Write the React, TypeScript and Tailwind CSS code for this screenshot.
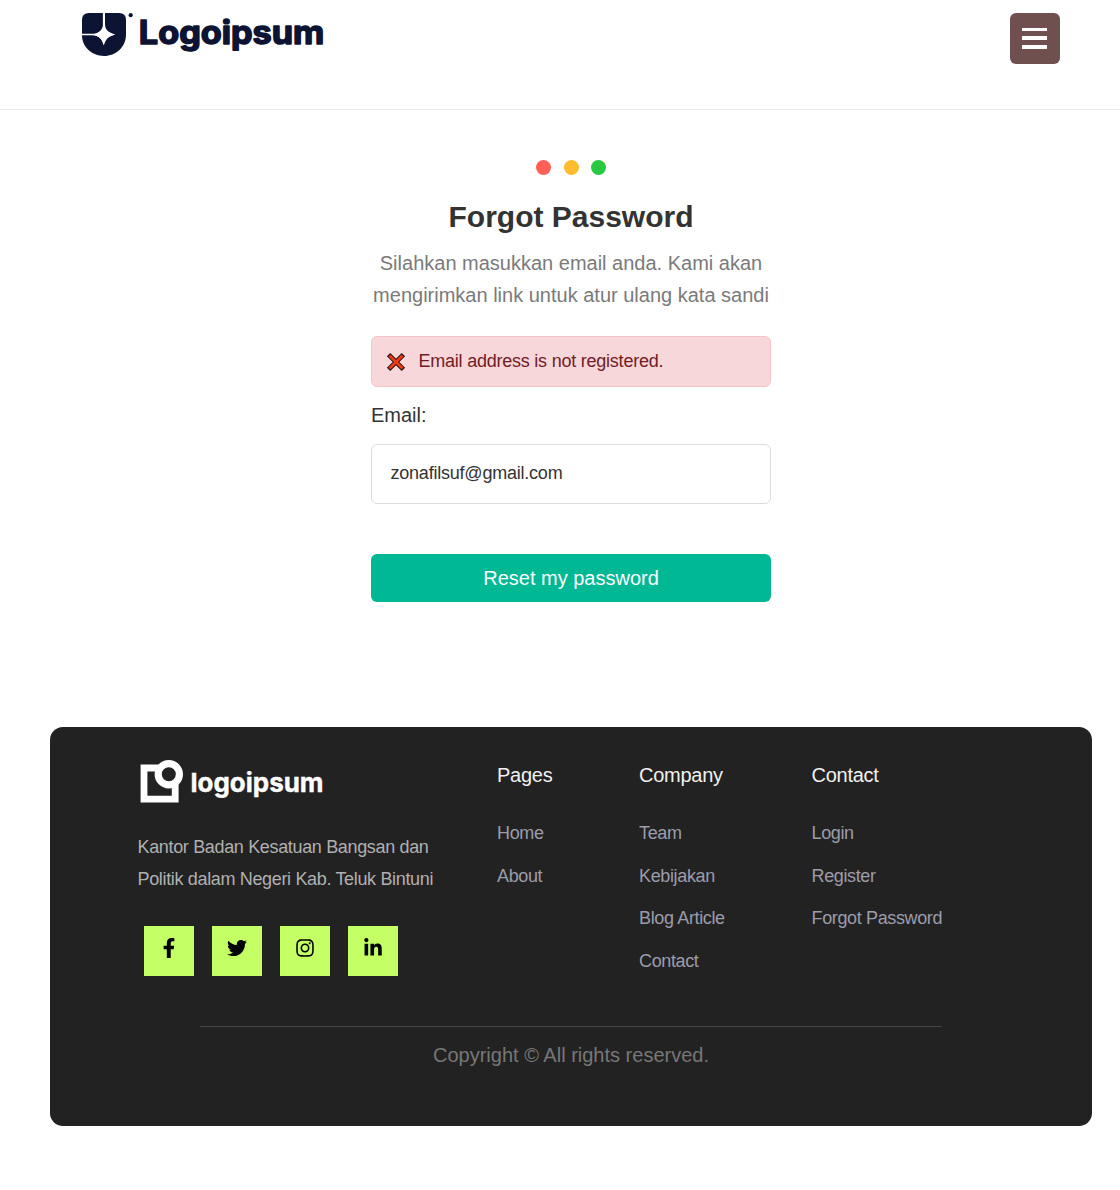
import type { ReactNode } from "react";
import { FaFacebookF, FaTwitter, FaInstagram, FaLinkedinIn } from "react-icons/fa";

function HeaderLogo() {
  return (
    <svg className="block h-[50px] w-[250px]" viewBox="80 10 250 50" aria-label="Logoipsum">
      <g fill="#0d1333">
        <path d="M89 13H102.9V25C102.9 30.5 98.5 33.8 92 33.8H82V20Q82 13 89 13Z" />
        <path d="M105 13H119Q126 13 126 20V34.5C126 47 116 56 104 56C92 56 82 47 82 35.3H92C99 35.3 102 39 103.8 45.3C105.5 38.5 109 36.2 115.2 34.5C108.5 32.5 105 30 105 24Z" />
        <circle cx="130.7" cy="15.2" r="2.1" />
      </g>
      <path d="M103.8 23.5C105 30.5 108.5 33 115.2 34.5C108.5 36 105.4 39 103.8 45.3C102.2 39 99 36 92.5 34.5C99 33 102.4 30.5 103.8 23.5Z" fill="#fff" />
      <text x="138.8" y="43.8" textLength="185.5" lengthAdjust="spacingAndGlyphs" fill="#0d1333" stroke="#0d1333" strokeWidth="1.5" strokeLinejoin="round" className="font-['Inter',sans-serif] text-[32px] font-bold">
        Logoipsum
      </text>
    </svg>
  );
}

function FooterLogo() {
  return (
    <svg className="block h-[46px] w-[190px]" viewBox="138 758 190 46" aria-label="logoipsum">
      <path d="M166 768H144V799.2H175.2V784" fill="none" stroke="#fff" strokeWidth="6.8" strokeLinecap="butt" strokeLinejoin="miter" />
      <circle cx="168.8" cy="774.2" r="10.6" fill="#222" stroke="#fff" strokeWidth="7.2" />
      <text x="190.5" y="791.6" textLength="133" lengthAdjust="spacingAndGlyphs" fill="#fff" stroke="#fff" strokeWidth="0.4" className="font-['Inter',sans-serif] text-[26px] font-bold">
        logoipsum
      </text>
    </svg>
  );
}

function CrossMark() {
  return (
    <svg className="h-5 w-5" viewBox="0 0 20 20" aria-hidden="true">
      <path d="M2.6 2.6L17.4 17.4M17.4 2.6L2.6 17.4" stroke="#1c1210" strokeWidth="4.8" />
      <path d="M3.4 3.4L16.6 16.6M16.6 3.4L3.4 16.6" stroke="#f03a17" strokeWidth="2.8" />
    </svg>
  );
}

function Social({ children, label }: { children: ReactNode; label: string }) {
  return (
    <a aria-label={label} className="flex h-[50px] w-[50px] justify-center bg-[#c4ff65] pt-[12px] pr-px text-xl text-black">
      {children}
    </a>
  );
}

function LinkColumn({ title, links, className }: { title: string; links: string[]; className: string }) {
  return (
    <div className={className}>
      <h3 className="text-xl leading-8 tracking-[-0.25px] text-[#f0f0f0]">{title}</h3>
      <ul className="mt-[26px] text-lg leading-8 tracking-[-0.36px] text-[#9c9cab]">
        {links.map((link) => (
          <li key={link} className="mb-[10.67px] whitespace-nowrap">
            {link}
          </li>
        ))}
      </ul>
    </div>
  );
}

export default function App() {
  return (
    <div className="h-[1190px] w-[1120px] overflow-hidden bg-white font-['Liberation_Sans',Arial,sans-serif] text-[#333]">
      <header className="flex h-[110px] items-start justify-between border-b border-[#ebebeb] pr-[60px] pl-20">
        <div className="pt-[10px]">
          <HeaderLogo />
        </div>
        <button aria-label="Menu" className="mt-[13px] flex h-[51px] w-[50px] flex-col items-start rounded-md bg-[#70504e] pt-[15px] pl-3">
          <span className="h-[3px] w-[25px] bg-white" />
          <span className="mt-[5px] h-1 w-[25px] bg-white" />
          <span className="mt-[5px] h-1 w-[25px] bg-white" />
        </button>
      </header>

      <main className="ml-[371px] h-[617px] w-[400px] pt-[50px]">
        <div className="flex justify-center gap-[12.5px]">
          <span className="h-[15px] w-[15px] rounded-full bg-[#ff5f57]" />
          <span className="h-[15px] w-[15px] rounded-full bg-[#febc2e]" />
          <span className="h-[15px] w-[15px] rounded-full bg-[#28c840]" />
        </div>
        <h1 className="mt-[22px] text-center text-[30px] leading-10 font-bold">Forgot Password</h1>
        <p className="mt-[10px] text-center text-xl leading-8 whitespace-nowrap text-[#7a7a7a]">
          Silahkan masukkan email anda. Kami akan
          <br />
          mengirimkan link untuk atur ulang kata sandi
        </p>
        <div className="mt-[25px] flex h-[51px] items-center rounded-md border border-[#f5c2c7] bg-[#f8d7da] pl-[14px] text-lg tracking-[-0.23px] text-[#721c24]">
          <CrossMark />
          <span className="ml-[12.5px] pb-[2px]">Email address is not registered.</span>
        </div>
        <label className="mt-3 block text-xl leading-8">Email:</label>
        <div className="mt-[13px] flex h-[60px] items-center rounded-md border border-[#ddd] pb-[2px] pl-[18.5px] text-lg tracking-[-0.22px]">
          zonafilsuf@gmail.com
        </div>
        <button className="mt-[50px] block h-12 w-full rounded-md bg-[#00b894] text-xl text-white">Reset my password</button>
      </main>

      <footer className="ml-[50px] h-[399px] w-[1042px] rounded-[13px] bg-[#222]">
        <div className="flex h-[299px] pt-8 pl-[87.5px]">
          <div className="-mt-px w-[359.5px]">
            <FooterLogo />
            <p className="mt-[27px] text-lg leading-8 tracking-[-0.34px] whitespace-nowrap text-[#b0b0b0]">
              Kantor Badan Kesatuan Bangsan dan
              <br />
              Politik dalam Negeri Kab. Teluk Bintuni
            </p>
            <div className="mt-[31px] ml-[6.5px] flex gap-[18px]">
              <Social label="Facebook"><FaFacebookF /></Social>
              <Social label="Twitter"><FaTwitter /></Social>
              <Social label="Instagram"><FaInstagram /></Social>
              <Social label="LinkedIn"><FaLinkedinIn /></Social>
            </div>
          </div>
          <LinkColumn className="w-[142px]" title="Pages" links={["Home", "About"]} />
          <LinkColumn className="w-[172.5px]" title="Company" links={["Team", "Kebijakan", "Blog Article", "Contact"]} />
          <LinkColumn className="w-[150px]" title="Contact" links={["Login", "Register", "Forgot Password"]} />
        </div>
        <div className="mx-[150px] border-t border-[#464646] pt-3 text-center text-xl leading-8 text-[#777]">
          Copyright © All rights reserved.
        </div>
      </footer>
    </div>
  );
}
